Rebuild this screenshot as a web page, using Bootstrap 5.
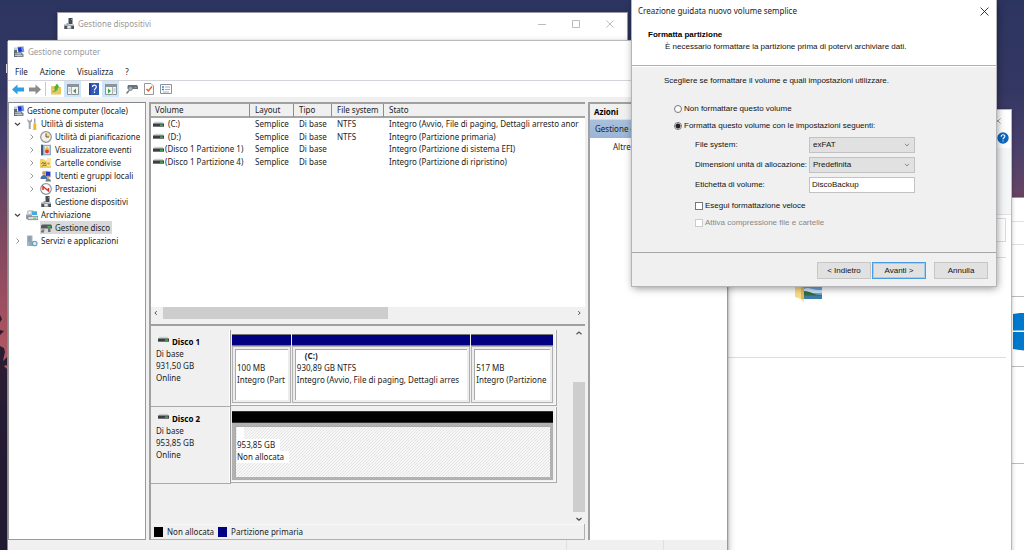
<!DOCTYPE html>
<html lang="it">
<head>
<meta charset="utf-8">
<meta name="viewport" content="width=device-width, initial-scale=1">
<title>Gestione computer</title>
<link href="https://cdn.jsdelivr.net/npm/bootstrap@5.3.0/dist/css/bootstrap.min.css" rel="stylesheet">
<style>
:root{--ui:"Noto Sans","Open Sans",sans-serif;--dlg:"Liberation Sans",Arial,sans-serif}
body{font:8px/12px var(--ui);color:#222;background:#231c35;min-height:100vh;overflow:hidden}
button,input,select{font:inherit;color:inherit}
a{color:inherit;text-decoration:none}
svg{display:block;flex:none}
.desktop{height:100vh;background:linear-gradient(180deg,#2c3560 0,#343763 90px,#4a3f6b 150px,#6b4563 200px,#84495f 250px,#a9525f 330px,#b4605f 372px,#251c35 400px,#211a30 100%)}
.trees{left:0;top:310px;width:8px;height:92px}
.peek{left:6px;top:64px;width:3px;height:9px;background:#ddd}
.win{background:#fff;box-shadow:0 0 0 1px #9a9aa4,0 1px 6px rgba(0,0,0,.35)}
.win-dev{left:58px;right:397px;top:13px;height:80px}
.win-pc{left:8px;right:297px;top:41px;bottom:-12px;box-shadow:-1px 0 0 #85899c,0 -1px 0 #b9b9be,1px 0 2px #999,3px 0 6px rgba(0,0,0,.18)}
.win-exp{left:728px;right:13px;top:110px;bottom:-12px;box-shadow:0 0 0 1px #b8b8bf,1px 0 4px rgba(0,0,0,.25)}
.win-side{left:1011px;right:-60px;top:198px;bottom:-12px}
.win-dlg{left:632px;width:364px;top:0;box-shadow:0 0 0 1px #b4b4b8,1px 2px 8px rgba(0,0,0,.45);font-family:var(--dlg);color:#111}
.ttl{height:22px;padding-left:5px;gap:3px;color:#999}
.win-btns button,.plain{border:0;background:none;padding:0}
.win-btns button{width:34px;height:22px;display:flex;align-items:center;justify-content:center;color:#aaa}
.menu{height:17px;padding:1px 0 0 7px;gap:12px;color:#222}
.tools{height:17px;border-top:1px solid #d4d4dc;padding-left:1px}
.tools button{border:0;background:none;padding:0;height:16px;display:flex;align-items:center;justify-content:center}
.tools .on{background:#cde6f9}
.t18{width:17px}.sep{width:1px;height:14px;background:#c8c8c8;margin:0 1px 0 2px}
.work{background:#f0f0f0;padding:5px 0 0;display:grid;grid-template-columns:138px 436px minmax(0,1fr);column-gap:3px}
.status{height:22px;background:#f0f0f0;padding-left:558px}
.status i{width:97px;flex:none;border-left:1px solid #e0e0e0;height:100%}
.pane{background:#fff;border:1px solid #9a9a9a;border-top:1px solid #828790}
.pane-mid{border-left:2px solid #a0a0a0;border-top:2px solid #a0a0a0;background:#f0f0f0}
.pane-act{border-left:2px solid #a0a0a0;border-top:2px solid #a0a0a0;background:#fff}
.tree{padding-top:1px;margin:0;list-style:none}
.tree li{height:13px;display:flex;align-items:center;line-height:13px;white-space:nowrap}
.tree .lv1{padding-left:4px}.tree .lv2{padding-left:18px}
.tree .tw{width:9px;margin-right:4px;flex:none}
.tree .ic{width:12px;margin-right:1px;flex:none}
.tree span{padding:0 2px}
.tree .hit{background:#d9d9d9;display:flex;align-items:center}
.vols{background:#fff;overflow:hidden}
.vols table{width:100%;table-layout:fixed;border-collapse:separate;border-spacing:0;white-space:nowrap}
.vols th{font-weight:400;height:14px;padding:0 0 0 5px;background:#f0f0f0;border-right:1px solid #8d8d8d;border-bottom:2px solid #a5a5a5;line-height:12px}
.vols th:last-child{border-right:0}
.vols td{padding:0 0 0 5px;line-height:12px}
.vols tbody{height:50px}
.vols th:first-child{padding-left:4px}
.vols td:first-child{padding-left:2px}
.vols .nm{display:flex;align-items:center;gap:1px}
.vols .pad-n{padding-left:3px}
.hs{height:12px;background:#f0f0f0;display:flex;align-items:center;padding:0 3px 0 2px}
.hs b{height:12px;width:225px;background:#cdcdcd;margin-left:4px}
.hs-end{height:7px;border-bottom:2px solid #a0a0a0}
.vs{width:12px;display:flex;flex-direction:column;align-items:center;padding:3px 0 1px}
.vs b{width:12px;height:130px;background:#cdcdcd;margin:45px 0 3px}
.disk{height:77px;display:grid;grid-template-columns:80px minmax(0,1fr);width:406px}
.dlabel{border-right:1px solid #999;border-bottom:1px solid #aaa;padding:6px 6px 0 5px;box-shadow:inset -1px 0 0 #fff}
.dlabel strong{display:flex;gap:3px;padding-left:2px;color:#000}
.dparts{border-right:1px solid #aaa;border-bottom:1px solid #aaa;margin-bottom:1px;padding:4px 3px 3px 1px;box-shadow:inset -1px -1px 0 #fafafa;display:grid;column-gap:1px}
.d1 .dparts{grid-template-columns:59fr 179fr 82fr}
.part{display:flex;flex-direction:column;min-width:0}
.bar{height:12px;background:#000080;border:1px solid #777;border-width:1px 0}
.bar-k{background:#000;border-color:#333}
.box{flex:1;background:#fff;border:2px solid #ededed;box-shadow:0 0 0 1px #b0b0b0,inset 1px 1px 0 #aaa;margin:1px 1px 0;padding:1px 0 0 2px;overflow:hidden;white-space:nowrap}
.box-h{border-color:#b2b2b2;background:linear-gradient(135deg,#e4e4e4 12.5%,#f7f7f7 12.5% 50%,#e4e4e4 50% 62.5%,#f7f7f7 62.5%) 0 0/3px 3px}
.box-h span{background:#fff;padding-right:5px;display:table;line-height:12px;height:12px}
.part p,.dlabel p{margin:0}
.legend{height:16px;padding-left:3px;gap:4px;border:1px solid #b0b0b0;border-width:0 1px 1px 0;box-shadow:inset 0 1px 0 #f8f8f8}
.key{width:9px;height:10px;background:#000}.key-p{background:#000080}
.act h2{font:700 8px/15px var(--ui);height:16px;padding-left:4px;margin:0;background:#f0f0f0;border-bottom:1px solid #ddd;color:#000}
.act .sel{height:18px;background:linear-gradient(#a9c0dd,#9ab5d7);line-height:18px;padding-left:5px}
.act .oth{line-height:18px;padding-left:23px}
.ribbon{height:67px;margin-top:4px;background:#f4f6f8;border-bottom:1px solid #e2e2e2}
.exhead{height:34px;padding-right:2px}
.addr{height:24px;margin:3px 5px 0 0;border:1px solid #dcdcdc}
.rule{border-bottom:1px solid #ddd;margin-right:5px}
.rule-a{height:16px}
.rule-b{height:100px;padding:25px 0 0 67px}
.row-a{height:24px}.row-b{height:23px}.row-c{height:52px}.row-d{height:70px;padding-top:16px}.row-e{height:97px}
.row-c,.row-d,.row-e{border-bottom:1px solid #bbb}
.dlg-t{font-family:var(--ui);height:22px;padding:0 7px 0 6px;color:#222}
.dlg-h{padding:7px 16px 0;height:44px;border-bottom:1px solid #b0b0b0;background:#fff}
.dlg-h h1{font:700 8px/12px var(--dlg);margin:0;color:#000}
.dlg-h p{margin:0;padding-left:17px;line-height:11px}
.dlg-b{background:#f0f0f0;padding:8px 32px 0;height:187px;border-bottom:1px solid #a6a6a6;border-top:1px solid #fff}
.dlg-b input[type=radio],.dlg-b input[type=checkbox]{appearance:none;width:8px;height:8px;margin:0;background:#fff;border:1px solid #777;flex:none}
.dlg-b input[type=radio]{border-radius:50%}
.dlg-b input[type=radio]:checked{background:radial-gradient(circle,#222 0 2px,#fff 3px)}
.dlg-b input:disabled{border-color:#ccc}
.opt{gap:2px;height:12px}
.radios{display:grid;row-gap:5px;padding:0 0 5px 10px}
.checks{display:grid;row-gap:5px;padding-top:3px}
.off{color:#888}
.frm{padding-left:31px}
.fld{display:grid;grid-template-columns:114px 106px;height:16px;align-items:center;margin-bottom:4px}
.fld select,.fld input{height:16px;width:106px;border:1px solid #c2c2c2;border-radius:0;padding:0 3px;appearance:none;line-height:14px}
.fld select{background:#e1e1e1 url("data:image/svg+xml,%3Csvg xmlns='http://www.w3.org/2000/svg' viewBox='0 0 6 4'%3E%3Cpath d='M1 .8 3 3 5 .8' fill='none' stroke='%23777' stroke-width='.8'/%3E%3C/svg%3E") no-repeat right 4px center/6px 4px}
.fld input{background:#fff;padding:0 2px 2px;line-height:12px}
.dlg-f{background:#f0f0f0;height:33px;padding:2px 8px 0 0}
.dlg-f button{width:54px;height:17px;border:1px solid #c6c6c6;background:#e1e1e1;padding:0;border-radius:0;line-height:12px}
.dlg-f .go{border-color:#4a9be0;box-shadow:inset 0 0 0 1px #a3cdf0;margin-left:1px;margin-right:8px}
</style>
</head>
<body>
<svg width="0" height="0" class="position-absolute" aria-hidden="true">
<symbol id="i-pc" viewBox="0 0 12 12"><path d="M1 1.500h3v4H1z" fill="#c5cfd6"/><path d="M4 .8 10.600 0l.8 6.200-6.200.9z" fill="#bac7d8"/><path d="M4.800 1.500 10 1l.6 4.400-5.200.7z" fill="#1d31c9"/><path d="M8 1.200 10 1l.6 4.400-1.600.2z" fill="#6b9af0"/><path d="M1 6.500 8 6l2.500 2.500V11H1z" fill="#7d8790"/><path d="M1 4h3v7H1z" fill="#5f6d78"/><path d="M2 7.800h6M2 9.500h7" stroke="#d9dde0" stroke-width=".8"/></symbol>
<symbol id="i-dev" viewBox="0 0 12 12"><path d="M5.500 0h4v6h-4z" fill="#454b50"/><path d="M8 1h1v1H8z" fill="#3fd04b"/><path d="M1 6.500h2.500V5h2v1.500h5.500V11H1z" fill="#a2a8ad"/><path d="M1.500 8h2.700v3H1.500zM8.300 8H11v3H8.300z" fill="#4c5257"/><path d="M4.500 8h3v2h-3z" fill="#e7e9ea"/></symbol>
<symbol id="i-drv" viewBox="0 0 11 6"><path d="M1.500.3h8L11 2.500H0z" fill="#cdd1d3"/><path d="M0 2h11v3.200H0z" fill="#3b3f42"/><path d="M7 3h3v1.300H7z" fill="#38c44b"/></symbol>
<symbol id="i-tools" viewBox="0 0 12 12"><path d="M1.500.5v3l1.200 1v6.500h2V4.500L6 3.500v-3L4.800 2.500H2.700z" fill="#9aa4ab"/><path d="M8.300.5h1v5h-1z" fill="#777"/><path d="M7.300 5.500h3V12h-3z" fill="#f0b92c"/></symbol>
<symbol id="i-clock" viewBox="0 0 12 12"><circle cx="6" cy="6" r="5.300" fill="#f4f1e4" stroke="#8d9298" stroke-width="1.200"/><path d="M6 6V1.500A4.500 4.500 0 0 1 10.500 6z" fill="#f6d98e"/><path d="M6 2.500V6h3" fill="none" stroke="#444" stroke-width=".9"/></symbol>
<symbol id="i-event" viewBox="0 0 12 12"><path d="M1 .8h10v10.500H1z" fill="#8da9cb"/><path d="M1 .8h2v10.500H1z" fill="#405a85"/><path d="M4.500 2h5v8h-5z" fill="#e7edf5"/><path d="m7 2 3 4.500H4z" fill="#f5c22c"/><circle cx="7" cy="7.500" r="2" fill="#e13d35"/></symbol>
<symbol id="i-share" viewBox="0 0 12 12"><path d="M0 2h4l1 1.500H11V11H0z" fill="#f3d15f"/><path d="M7 1h4v8H7z" fill="#fae9a5"/><path d="M1.500 6.500c2-2 3 1 4.500-.5M2 9.500c2-3 3 0 4.500-1.500" stroke="#5a5a4c" fill="none"/><circle cx="8.500" cy="6.500" r="1.300" fill="#d79b6a"/></symbol>
<symbol id="i-users" viewBox="0 0 12 12"><path d="M5 .5 11 1v6.500L5 7z" fill="#c7cfd9"/><path d="M6 1.500 10.200 2v4.500L6 6z" fill="#1e3ac8"/><circle cx="4" cy="3" r="1.900" fill="#c99a62"/><path d="M.5 9c0-3 2-4 3.500-4s3.500 1 3.500 4z" fill="#426fb5"/><circle cx="8" cy="7" r="1.500" fill="#cfa46b"/><path d="M5.500 11.500c0-2 1-3 2.500-3s3 1 3 3z" fill="#747d88"/></symbol>
<symbol id="i-perf" viewBox="0 0 12 12"><circle cx="6" cy="6" r="5.300" fill="#fff" stroke="#8f979d" stroke-width="1.200"/><path d="M3 7V3.500L8.500 8V5" fill="none" stroke="#d93030" stroke-width="1.500"/></symbol>
<symbol id="i-store" viewBox="0 0 13 12"><path d="M1 1.500 4 .5h4v5H1z" fill="#c9d0d5"/><circle cx="4" cy="3.500" r="1.700" fill="#fff" stroke="#999" stroke-width=".5"/><path d="M6.500 2H12v4H6.500z" fill="#45aadc"/><path d="M0 5.500h6.500v5H0z" fill="#99a4ac"/><path d="M2 7.500h11V11H2z" fill="#d5dade" stroke="#6f777d" stroke-width=".8"/><path d="M8 9h3v1H8z" fill="#3dc94d"/></symbol>
<symbol id="i-disk" viewBox="0 0 12 12"><path d="M2 2.500h9l1 1.500v2.500H1V4z" fill="#54595d"/><path d="M7.500 4.200h3v1.300h-3z" fill="#42d552"/><path d="M1.500 7.500h3v1.200h-3zM1 9h3v1.500H1zM8 6.500h2.500V10H8z" fill="#6d7276"/></symbol>
<symbol id="i-serv" viewBox="0 0 12 12"><path d="M1 .5h5.500V11H1z" fill="#a9b6c0"/><path d="M2 2h3.500M2 4h3.500M2 6h3.500" stroke="#6f7f8d" stroke-width=".8"/><path d="M3.500 6.500h4v4.500h-4z" fill="#7faecb"/><circle cx="8.700" cy="8.500" r="2.300" fill="#dde7ee" stroke="#6e9dbd" stroke-width="1.100"/></symbol>
<symbol id="c-r" viewBox="0 0 8 8"><path d="M3 1.500 5.500 4 3 6.500" fill="none" stroke="#999"/></symbol>
<symbol id="c-rd" viewBox="0 0 8 8"><path d="M3 1.500 5.500 4 3 6.500" fill="none" stroke="#444" stroke-width="1.200"/></symbol>
<symbol id="c-d" viewBox="0 0 8 8"><path d="M1.500 3 4 5.300 6.500 3" fill="none" stroke="#444" stroke-width="1.200"/></symbol>
<symbol id="c-l" viewBox="0 0 8 8"><path d="M5 1.500 2.500 4 5 6.500" fill="none" stroke="#444" stroke-width="1.200"/></symbol>
<symbol id="c-u" viewBox="0 0 8 8"><path d="M1.500 5.300 4 3l2.500 2.300" fill="none" stroke="#555" stroke-width="1.200"/></symbol>
<symbol id="w-x" viewBox="0 0 8 8"><path d="m.5.5 7 7m0-7-7 7" fill="none" stroke="currentColor" stroke-width=".8"/></symbol>
</svg>

<main class="desktop position-relative overflow-hidden">
<svg class="trees position-absolute" viewBox="0 0 8 92"><path d="M0 5 2 9 0 12zM0 20l4 1-4 4zM0 36l4 2 1 4-2 9 5-5v8l-4 2 4 4v32H0zM5 54l3-2v5z" fill="#2a1c33"/></svg>
<i class="peek position-absolute"></i>

<section class="win win-side position-absolute">
  <div class="row-a border-bottom"></div>
  <div class="row-b border-bottom"></div>
  <div class="row-c"></div>
  <div class="row-d"><svg width="38" height="38" viewBox="0 0 38 38"><path d="M0 1h.8v35H0zM2 1 38-4v21.500H2zM2 19h36v22L2 36z" fill="#0078cc"/></svg></div>
  <div class="row-e"></div>
</section>

<section class="win win-exp position-absolute">
  <div class="exhead d-flex flex-column align-items-end justify-content-between">
    <button class="plain pt-2 pe-2 text-secondary" aria-label="Chiudi"><svg width="6" height="6"><use href="#w-x"/></svg></button>
    <button class="plain" aria-label="Guida"><svg width="12" height="12" viewBox="0 0 12 12"><circle cx="6" cy="6" r="5.700" fill="#0b68c0"/><path d="M4.200 4.700C4.200 2 8 2.200 7.800 4.500 7.700 5.800 6 5.800 6 7.300M6 8.400v1.200" fill="none" stroke="#fff" stroke-width="1.200"/></svg></button>
  </div>
  <div class="ribbon"></div>
  <div class="addr"></div>
  <div class="rule rule-a"></div>
  <div class="rule rule-b"><svg width="28" height="20" viewBox="0 0 28 20"><path d="M0 0h7l2 3v16l-3-3-6-2z" fill="#fbdc84"/><path d="M6 3h3v13H6z" fill="#dfb95c"/><path d="M9 2h18v14H9z" fill="#6aa5ea"/><path d="M9 6c5-3 8 2 18 1v3H9z" fill="#cfe4f7"/><path d="M9 8c7 0 9 4 18 4v1H9z" fill="#356b43"/><path d="M9 12.500h18V16H9z" fill="#3b7fa8"/></svg></div>
</section>

<section class="win win-dev position-absolute">
  <header class="ttl d-flex align-items-center"><svg width="12" height="12"><use href="#i-dev"/></svg><span>Gestione dispositivi</span>
    <div class="win-btns d-flex ms-auto"><button aria-label="Riduci a icona"><svg width="8" height="8" viewBox="0 0 8 8"><path d="M0 4.500h8" stroke="#bbb"/></svg></button><button aria-label="Ingrandisci"><svg width="8" height="8" viewBox="0 0 8 8"><path d="M.5.5h7v7h-7z" fill="none" stroke="#bbb"/></svg></button><button aria-label="Chiudi"><svg width="8" height="8"><use href="#w-x"/></svg></button></div>
  </header>
</section>

<section class="win win-pc position-absolute d-flex flex-column">
  <header class="ttl d-flex align-items-center"><svg width="12" height="12"><use href="#i-pc"/></svg><span>Gestione computer</span></header>
  <nav class="menu d-flex align-items-center"><a href="#">File</a><a href="#">Azione</a><a href="#">Visualizza</a><a href="#">?</a></nav>
  <div class="tools d-flex align-items-center">
    <button class="t18" aria-label="Indietro"><svg width="12" height="11" viewBox="0 0 12 11"><path d="M0 5.500 5.500.5v3H12v4H5.500v3z" fill="#2b9fe6"/></svg></button>
    <button class="t18" aria-label="Avanti"><svg width="12" height="11" viewBox="0 0 12 11"><path d="M12 5.500 6.500.5v3H0v4h6.500v3z" fill="#8b8b8b"/></svg></button>
    <i class="sep"></i>
    <button class="t18" aria-label="Livello superiore"><svg width="12" height="12" viewBox="0 0 12 12"><path d="M1 3h4l1 1h5v7.500H1z" fill="#e8c766"/><path d="M2 8.500c1.500 0 3-1 3-3H3.500L7 .5l2.500 4H8c0 3-2.500 5-6 4z" fill="#4cb531"/></svg></button>
    <button class="t18 on" aria-label="Mostra albero"><svg width="12" height="11" viewBox="0 0 12 11"><path d="M.5.5h11v10H.5z" fill="#f4f4f4" stroke="#8b939b"/><path d="M0 0h12v3H0z" fill="#8b939b"/><path d="M4.500 3v8M1.500 5h2M1.500 7h2" stroke="#a9b0b6"/><path d="M9 4.500v5L6 7z" fill="#3aa53a"/></svg></button>
    <button class="t18 ms-1" aria-label="Guida"><svg width="10" height="12" viewBox="0 0 10 12"><path d="M0 0h10v12H0z" fill="#3157b8"/><path d="M0 0h1.500v12H0z" fill="#1d3a8a"/><path d="M3.500 4C3.500 1.300 7.500 1.500 7.300 4 7.200 5.500 5.500 5.500 5.500 7.500M5.500 8.600V10" fill="none" stroke="#fff" stroke-width="1.200"/></svg></button>
    <button class="t18 on" aria-label="Mostra riquadro azioni"><svg width="12" height="11" viewBox="0 0 12 11"><path d="M.5.5h11v10H.5z" fill="#f4f4f4" stroke="#8b939b"/><path d="M0 0h12v3H0z" fill="#8b939b"/><path d="M7.500 3v8M8.500 5h2M8.500 7h2" stroke="#a9b0b6"/><path d="M3 4.500v5L6 7z" fill="#3aa53a"/></svg></button>
    <button class="t18 ms-1" aria-label="Aggiorna"><svg width="12" height="10" viewBox="0 0 12 10"><path d="M2 1h9l1 1.500V5H1.500V2.500z" fill="#6b7276"/><path d="M8.500 3h2v1h-2z" fill="#42d552"/><circle cx="4.500" cy="4.500" r="2" fill="#8bbbe0" stroke="#777" stroke-width=".8"/><path d="m3 6.500-2.500 3" stroke="#777" stroke-width="1.500"/></svg></button>
    <button class="t18" aria-label="Proprietà"><svg width="10" height="12" viewBox="0 0 10 12"><path d="M.5.5H7L9.500 3v8.500h-9z" fill="#fff" stroke="#999"/><path d="m2.500 6 1.800 2L8 3.500" fill="none" stroke="#ee5b1c" stroke-width="1.400"/></svg></button>
    <button class="t18" aria-label="Impostazioni"><svg width="12" height="10" viewBox="0 0 12 10"><path d="M.5.5h11v9H.5z" fill="#fff" stroke="#8b939b"/><path d="M2 3h2M2 5.500h2" stroke="#2b8bd6" stroke-width="1.300"/><path d="M5 3h5M5 5.500h5M3 8h6" stroke="#aab"/></svg></button>
  </div>
  <div class="work flex-grow-1">
    <ul class="pane tree ps-0">
      <li class="ps-1"><svg width="12" height="12"><use href="#i-pc"/></svg><span>Gestione computer (locale)</span></li>
      <li class="lv1"><svg class="tw" height="8"><use href="#c-d"/></svg><svg class="ic" height="12"><use href="#i-tools"/></svg><span>Utilità di sistema</span></li>
      <li class="lv2"><svg class="tw" height="8"><use href="#c-r"/></svg><svg class="ic" height="12"><use href="#i-clock"/></svg><span>Utilità di pianificazione</span></li>
      <li class="lv2"><svg class="tw" height="8"><use href="#c-r"/></svg><svg class="ic" height="12"><use href="#i-event"/></svg><span>Visualizzatore eventi</span></li>
      <li class="lv2"><svg class="tw" height="8"><use href="#c-r"/></svg><svg class="ic" height="12"><use href="#i-share"/></svg><span>Cartelle condivise</span></li>
      <li class="lv2"><svg class="tw" height="8"><use href="#c-r"/></svg><svg class="ic" height="12"><use href="#i-users"/></svg><span>Utenti e gruppi locali</span></li>
      <li class="lv2"><svg class="tw" height="8"><use href="#c-r"/></svg><svg class="ic" height="12"><use href="#i-perf"/></svg><span>Prestazioni</span></li>
      <li class="lv2"><i class="tw"></i><svg class="ic" height="12"><use href="#i-dev"/></svg><span>Gestione dispositivi</span></li>
      <li class="lv1"><svg class="tw" height="8"><use href="#c-d"/></svg><svg class="ic" height="12"><use href="#i-store"/></svg><span>Archiviazione</span></li>
      <li class="lv2"><i class="tw"></i><div class="hit"><svg class="ic" height="12"><use href="#i-disk"/></svg><span>Gestione disco</span></div></li>
      <li class="lv1"><svg class="tw" height="8"><use href="#c-r"/></svg><svg class="ic" height="12"><use href="#i-serv"/></svg><span>Servizi e applicazioni</span></li>
    </ul>
    <div class="pane-mid d-flex flex-column">
      <div class="vols flex-grow-1">
        <table>
          <colgroup><col style="width:99px"><col style="width:44px"><col style="width:38px"><col style="width:52px"><col></colgroup>
          <thead><tr><th>Volume</th><th>Layout</th><th>Tipo</th><th>File system</th><th>Stato</th></tr></thead>
          <tbody>
            <tr><td><div class="nm"><svg width="11" height="7"><use href="#i-drv"/></svg><span class="pad-n">(C:)</span></div></td><td>Semplice</td><td>Di base</td><td>NTFS</td><td>Integro (Avvio, File di paging, Dettagli arresto anor</td></tr>
            <tr><td><div class="nm"><svg width="11" height="7"><use href="#i-drv"/></svg><span class="pad-n">(D:)</span></div></td><td>Semplice</td><td>Di base</td><td>NTFS</td><td>Integro (Partizione primaria)</td></tr>
            <tr><td><div class="nm"><svg width="11" height="7"><use href="#i-drv"/></svg>(Disco 1 Partizione 1)</div></td><td>Semplice</td><td>Di base</td><td></td><td>Integro (Partizione di sistema EFI)</td></tr>
            <tr><td><div class="nm"><svg width="11" height="7"><use href="#i-drv"/></svg>(Disco 1 Partizione 4)</div></td><td>Semplice</td><td>Di base</td><td></td><td>Integro (Partizione di ripristino)</td></tr>
          </tbody>
        </table>
      </div>
      <div class="hs"><svg width="6" height="6"><use href="#c-l"/></svg><b></b><svg class="ms-auto" width="6" height="6"><use href="#c-rd"/></svg></div>
      <div class="hs-end"></div>
      <div class="d-flex justify-content-between">
        <div class="pt-1">
          <div class="disk d1">
            <div class="dlabel"><strong><svg width="11" height="7"><use href="#i-drv"/></svg>Disco 1</strong><p>Di base</p><p>931,50 GB</p><p>Online</p></div>
            <div class="dparts">
              <div class="part"><div class="bar"></div><div class="box"><p>&nbsp;</p><p>100 MB</p><p>Integro (Part</p></div></div>
              <div class="part"><div class="bar"></div><div class="box"><p class="ps-2 fw-bold">(C:)</p><p>930,89 GB NTFS</p><p>Integro (Avvio, File di paging, Dettagli arres</p></div></div>
              <div class="part"><div class="bar"></div><div class="box"><p>&nbsp;</p><p>517 MB</p><p>Integro (Partizione</p></div></div>
            </div>
          </div>
          <div class="disk d2">
            <div class="dlabel"><strong><svg width="11" height="7"><use href="#i-drv"/></svg>Disco 2</strong><p>Di base</p><p>953,85 GB</p><p>Online</p></div>
            <div class="dparts">
              <div class="part"><div class="bar bar-k"></div><div class="box box-h"><span>&nbsp;</span><span>953,85 GB</span><span>Non allocata</span></div></div>
            </div>
          </div>
        </div>
        <div class="vs"><svg width="8" height="8"><use href="#c-u"/></svg><b></b><svg width="8" height="8"><use href="#c-d"/></svg></div>
      </div>
      <div class="legend d-flex align-items-center"><i class="key"></i>Non allocata<i class="key key-p"></i>Partizione primaria</div>
    </div>
    <aside class="pane-act act"><h2>Azioni</h2><div class="sel">Gestione disco</div><div class="oth">Altre azioni</div></aside>
  </div>
  <footer class="status d-flex"><i></i><i></i></footer>
</section>

<section class="win win-dlg position-absolute" role="dialog" aria-label="Creazione guidata nuovo volume semplice">
  <header class="dlg-t d-flex align-items-center justify-content-between bg-white"><span>Creazione guidata nuovo volume semplice</span><button class="plain" aria-label="Chiudi"><svg width="9" height="9"><use href="#w-x"/></svg></button></header>
  <div class="dlg-h"><h1>Formatta partizione</h1><p>È necessario formattare la partizione prima di potervi archiviare dati.</p></div>
  <div class="dlg-b">
    <p class="mb-3">Scegliere se formattare il volume e quali impostazioni utilizzare.</p>
    <div class="radios">
      <div class="opt d-flex align-items-center"><input type="radio" name="fmt" id="r1"><label for="r1">Non formattare questo volume</label></div>
      <div class="opt d-flex align-items-center"><input type="radio" name="fmt" id="r2" checked><label for="r2">Formatta questo volume con le impostazioni seguenti:</label></div>
    </div>
    <div class="frm">
      <div class="fld"><label for="fs">File system:</label><select id="fs"><option>exFAT</option></select></div>
      <div class="fld"><label for="au">Dimensioni unità di allocazione:</label><select id="au"><option>Predefinita</option></select></div>
      <div class="fld"><label for="vl">Etichetta di volume:</label><input id="vl" type="text" value="DiscoBackup"></div>
      <div class="checks">
        <div class="opt d-flex align-items-center"><input type="checkbox" id="k1"><label for="k1">Esegui formattazione veloce</label></div>
        <div class="opt d-flex align-items-center"><input type="checkbox" id="k2" disabled><label class="off" for="k2">Attiva compressione file e cartelle</label></div>
      </div>
    </div>
  </div>
  <footer class="dlg-f d-flex align-items-center justify-content-end"><button>&lt; Indietro</button><button class="go">Avanti &gt;</button><button>Annulla</button></footer>
</section>
</main>
<script src="https://cdn.jsdelivr.net/npm/bootstrap@5.3.0/dist/js/bootstrap.bundle.min.js"></script>
</body>
</html>
